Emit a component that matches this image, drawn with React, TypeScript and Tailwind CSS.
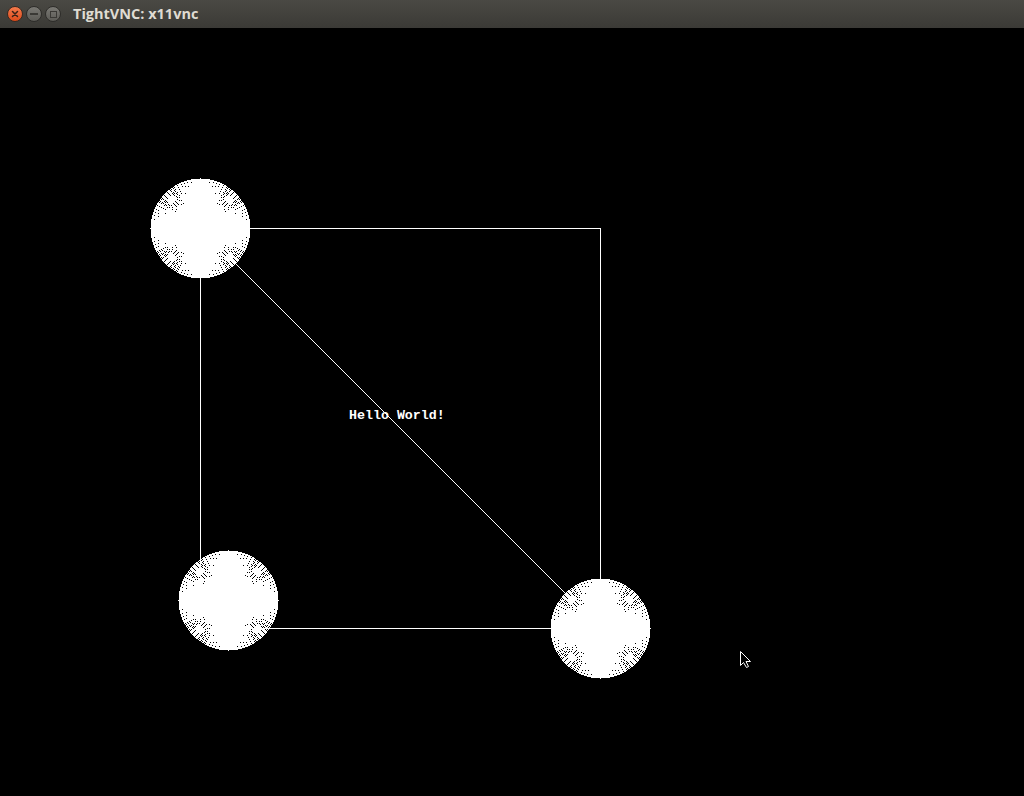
import React from "react";

function bres(x0: number, y0: number, x1: number, y1: number, s: Set<number>) {
  const dx = Math.abs(x1 - x0), sx = x0 < x1 ? 1 : -1;
  const dy = -Math.abs(y1 - y0), sy = y0 < y1 ? 1 : -1;
  let err = dx + dy;
  while (true) {
    s.add((y0 + 200) * 1000 + (x0 + 200));
    if (x0 === x1 && y0 === y1) break;
    const e2 = 2 * err;
    if (e2 >= dy) { err += dy; x0 += sx; }
    if (e2 <= dx) { err += dx; y0 += sy; }
  }
}

function fanPath(cx: number, cy: number) {
  const s = new Set<number>();
  for (let i = 0; i < 360; i++) {
    const a = (i * Math.PI) / 180;
    bres(0, 0, Math.trunc(50 * Math.cos(a)), Math.trunc(50 * Math.sin(a)), s);
  }
  let d = "";
  for (let y = -51; y <= 51; y++) {
    let x = -51;
    while (x <= 51) {
      if (s.has((y + 200) * 1000 + (x + 200))) {
        let x2 = x;
        while (x2 + 1 <= 51 && s.has((y + 200) * 1000 + (x2 + 1 + 200))) x2++;
        const w = x2 - x + 1;
        d += `M${cx + x} ${cy + y}h${w}v1h${-w}z`;
        x = x2 + 1;
      } else x++;
    }
  }
  return d;
}

const FANS = [fanPath(200, 228), fanPath(228, 600), fanPath(600, 628)];

export default function App() {
  return (
    <div className="w-[1024px] h-[796px] flex flex-col bg-black overflow-hidden">
      <div className="h-[28px] flex items-center bg-gradient-to-b from-[#4a4944] to-[#3b3a36] shrink-0">
        <div className="flex items-center gap-[3px] pl-[7px]">
          <div className="w-[16px] h-[16px] rounded-full bg-gradient-to-b from-[#f47a4b] to-[#de4a17] border border-[#3a2a22] flex items-center justify-center">
            <svg width="8" height="8" viewBox="0 0 8 8">
              <path d="M1.5 1.5 L6.5 6.5 M6.5 1.5 L1.5 6.5" stroke="#3b2217" strokeWidth="1.5" strokeLinecap="round" />
            </svg>
          </div>
          <div className="w-[16px] h-[16px] rounded-full bg-gradient-to-b from-[#7a7974] to-[#5c5b56] border border-[#2e2d2a] flex items-center justify-center">
            <div className="w-[8px] h-[2px] bg-[#3a3935]" />
          </div>
          <div className="w-[16px] h-[16px] rounded-full bg-gradient-to-b from-[#7a7974] to-[#5c5b56] border border-[#2e2d2a] flex items-center justify-center">
            <div className="w-[7px] h-[7px] border-[1.5px] border-[#3a3935]" />
          </div>
        </div>
        <div className="ml-[12px] text-[14.5px] font-bold text-[#dfdbd2] font-['Open_Sans',sans-serif] leading-none">
          TightVNC: x11vnc
        </div>
      </div>
      <div className="relative flex-1">
        <svg className="absolute left-0 top-[-28px]" width="1024" height="796" viewBox="0 0 1024 796">
          <g stroke="#fff" strokeWidth="1" shapeRendering="crispEdges" fill="none">
            <line x1="200.5" y1="228.5" x2="600.5" y2="228.5" />
            <line x1="600.5" y1="228.5" x2="600.5" y2="628.5" />
            <line x1="228.5" y1="628.5" x2="600.5" y2="628.5" />
            <line x1="200.5" y1="228.5" x2="200.5" y2="600.5" />
          </g>
          <line x1="200.5" y1="228.5" x2="600.5" y2="628.5" stroke="#fff" strokeWidth="1" />
          {FANS.map((d, i) => (
            <path key={i} d={d} fill="#fff" shapeRendering="crispEdges" />
          ))}
          <path
            d="M740.5 651.5 L740.5 665.5 L743.5 662.5 L746.5 667.5 L748.5 666.5 L746 661.5 L750.5 661.5 Z"
            fill="#000"
            stroke="#fff"
            strokeWidth="1"
          />
        </svg>
        <div className="absolute left-[349px] top-[381px] text-[13.3px] font-bold text-white font-['Liberation_Mono',monospace] leading-none">
          Hello World!
        </div>
      </div>
    </div>
  );
}
